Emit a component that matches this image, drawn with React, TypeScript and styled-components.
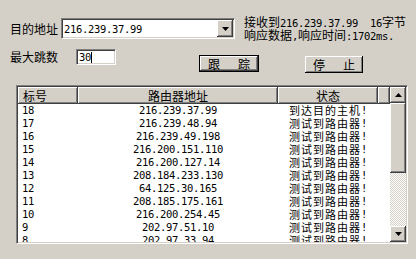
import React from "react";
import styled, { createGlobalStyle } from "styled-components";

const GlobalStyle = createGlobalStyle`
  html, body {
    margin: 0;
    padding: 0;
    background: #d4d0c8;
  }
  body {
    font-family: "Noto Sans CJK SC", "Noto Sans CJK TC", sans-serif;
    font-size: 12px;
    color: #000;
  }
`;

type Hop = { id: number; ip: string; status: string };

const hops: Hop[] = [
  { id: 18, ip: "216.239.37.99", status: "到达目的主机!" },
  { id: 17, ip: "216.239.48.94", status: "测试到路由器!" },
  { id: 16, ip: "216.239.49.198", status: "测试到路由器!" },
  { id: 15, ip: "216.200.151.110", status: "测试到路由器!" },
  { id: 14, ip: "216.200.127.14", status: "测试到路由器!" },
  { id: 13, ip: "208.184.233.130", status: "测试到路由器!" },
  { id: 12, ip: "64.125.30.165", status: "测试到路由器!" },
  { id: 11, ip: "208.185.175.161", status: "测试到路由器!" },
  { id: 10, ip: "216.200.254.45", status: "测试到路由器!" },
  { id: 9, ip: "202.97.51.10", status: "测试到路由器!" },
  { id: 8, ip: "202.97.33.94", status: "测试到路由器!" },
];

const Mono = styled.span`
  font-family: "DejaVu Sans Mono", "Liberation Mono", monospace;
  font-size: 10.5px;
  letter-spacing: -0.32px;
  white-space: pre;
`;

// ASCII runs get the narrow mono face, CJK runs stay 12px wide
const Txt = ({ children }: { children: string }) => {
  const parts = children.split(/([\x20-\x7e]+)/).filter(Boolean);
  return (
    <>
      {parts.map((p, i) =>
        /[\x20-\x7e]/.test(p[0]) ? <Mono key={i}>{p}</Mono> : <span key={i}>{p}</span>
      )}
    </>
  );
};

const Arrow = ({ up }: { up?: boolean }) => (
  <svg width="7" height="4" viewBox="0 0 7 4">
    <polygon points={up ? "3.5,0 7,4 0,4" : "0,0 7,0 3.5,4"} fill="#000" />
  </svg>
);

const Window = styled.div`
  width: 416px;
  height: 259px;
  box-sizing: border-box;
  padding: 18px 0 0 10px;
  background: #d4d0c8;
  overflow: hidden;
`;

const Row = styled.div<{ $h: number; $mt?: number }>`
  display: flex;
  align-items: flex-start;
  height: ${(p) => p.$h}px;
  margin-top: ${(p) => p.$mt ?? 0}px;
`;

const Label = styled.div<{ $w: number; $lh: number }>`
  width: ${(p) => p.$w}px;
  line-height: ${(p) => p.$lh}px;
  white-space: nowrap;
`;

const sunken = `
  box-sizing: border-box;
  border: 1px solid;
  border-color: #808080 #fff #fff #808080;
  box-shadow: inset 1px 1px 0 #404040, inset -1px -1px 0 #d4d0c8;
  background: #fff;
`;

const raised = `
  box-sizing: border-box;
  background: #d4d0c8;
  box-shadow: inset -1px -1px 0 #404040, inset 1px 1px 0 #fff, inset -2px -2px 0 #808080;
`;

const Combo = styled.div`
  ${sunken}
  width: 174px;
  height: 21px;
  display: flex;
  align-items: center;
  padding: 1px 1px 1px 2px;
`;

const ComboText = styled.div`
  flex: 1;
  line-height: 17px;
`;

const DropBtn = styled.div`
  ${raised}
  width: 16px;
  height: 17px;
  display: flex;
  align-items: center;
  justify-content: center;
`;

const Message = styled.div`
  margin: -2px 0 0 9px;
  line-height: 12px;
  white-space: nowrap;
`;

const HopInput = styled.div`
  ${sunken}
  width: 40px;
  height: 16px;
  display: flex;
  align-items: center;
  padding-left: 2px;
  line-height: 12px;
`;

const Caret = styled.span`
  width: 1px;
  height: 11px;
  background: #000;
`;

const Button = styled.div<{ $ml: number; $mt: number; $w: number; $default?: boolean }>`
  box-sizing: border-box;
  width: ${(p) => p.$w}px;
  height: 17px;
  margin: ${(p) => p.$mt}px 0 0 ${(p) => p.$ml}px;
  display: flex;
  align-items: center;
  justify-content: center;
  gap: 18px;
  line-height: 12px;
  background: #d4d0c8;
  box-shadow: ${(p) =>
    p.$default
      ? "inset -1px -1px 0 #000, inset 1px 1px 0 #000, inset -2px -2px 0 #404040, inset 2px 2px 0 #fff, inset -3px -3px 0 #808080"
      : "inset -1px -1px 0 #000, inset 1px 1px 0 #fff, inset -2px -2px 0 #808080"};
`;

const List = styled.div`
  ${sunken}
  width: 392px;
  height: 159px;
  margin: 12px 0 0 6px;
  display: flex;
  padding: 1px;
  overflow: hidden;
`;

const ListMain = styled.div`
  flex: 1;
  display: flex;
  flex-direction: column;
  overflow: hidden;
`;

const HeaderRow = styled.div`
  display: flex;
  height: 17px;
  flex-shrink: 0;
`;

const HeaderCell = styled.div<{ $w?: number; $align?: string }>`
  ${raised}
  ${(p) => (p.$w ? `width: ${p.$w}px;` : "flex: 1;")}
  display: flex;
  align-items: center;
  justify-content: ${(p) => p.$align ?? "center"};
  padding-left: ${(p) => (p.$align === "flex-start" ? 5 : 0)}px;
  line-height: 12px;
`;

const BodyRow = styled.div`
  display: flex;
  height: 13px;
  flex-shrink: 0;
  align-items: center;
  line-height: 13px;
  background: #fff;
`;

const Cell = styled.div<{ $w: number; $align?: string }>`
  box-sizing: border-box;
  width: ${(p) => p.$w}px;
  display: flex;
  justify-content: ${(p) => p.$align ?? "center"};
  padding-left: ${(p) => (p.$align === "flex-start" ? 4 : 0)}px;
  font-size: 11px;
  letter-spacing: 1px;
  white-space: nowrap;
`;

const Scrollbar = styled.div`
  width: 16px;
  display: flex;
  flex-direction: column;
`;

const ScrollBtn = styled.div`
  ${raised}
  width: 16px;
  height: 16px;
  flex-shrink: 0;
  display: flex;
  align-items: center;
  justify-content: center;
`;

const Thumb = styled.div`
  ${raised}
  height: 70px;
  flex-shrink: 0;
`;

const Track = styled.div`
  flex: 1;
  background: repeating-conic-gradient(#d4d0c8 0 25%, #fff 0 50%) 0 0 / 2px 2px;
`;

export default function App() {
  return (
    <>
      <GlobalStyle />
      <Window>
        <Row $h={21}>
          <Label $w={51} $lh={21}>目的地址</Label>
          <Combo>
            <ComboText>
              <Txt>216.239.37.99</Txt>
            </ComboText>
            <DropBtn>
              <Arrow />
            </DropBtn>
          </Combo>
          <Message>
            <div>
              <Txt>接收到216.239.37.99  16字节</Txt>
            </div>
            <div>
              <Txt>响应数据,响应时间:1702ms.</Txt>
            </div>
          </Message>
        </Row>
        <Row $h={24} $mt={10}>
          <Label $w={66} $lh={16}>最大跳数</Label>
          <HopInput>
            <Txt>30</Txt>
            <Caret />
          </HopInput>
          <Button $ml={83} $mt={6} $w={60} $default>
            <span>跟</span>
            <span>踪</span>
          </Button>
          <Button $ml={46} $mt={7} $w={58}>
            <span>停</span>
            <span>止</span>
          </Button>
        </Row>
        <List>
          <ListMain>
            <HeaderRow>
              <HeaderCell $w={60} $align="flex-start">标号</HeaderCell>
              <HeaderCell $w={200}>路由器地址</HeaderCell>
              <HeaderCell $w={100}>状态</HeaderCell>
              <HeaderCell />
            </HeaderRow>
            {hops.map((h) => (
              <BodyRow key={h.id}>
                <Cell $w={60} $align="flex-start">
                  <Txt>{String(h.id)}</Txt>
                </Cell>
                <Cell $w={200}>
                  <Txt>{h.ip}</Txt>
                </Cell>
                <Cell $w={100}>
                  <Txt>{h.status}</Txt>
                </Cell>
              </BodyRow>
            ))}
          </ListMain>
          <Scrollbar>
            <ScrollBtn>
              <Arrow up />
            </ScrollBtn>
            <Thumb />
            <Track />
            <ScrollBtn>
              <Arrow />
            </ScrollBtn>
          </Scrollbar>
        </List>
      </Window>
    </>
  );
}
